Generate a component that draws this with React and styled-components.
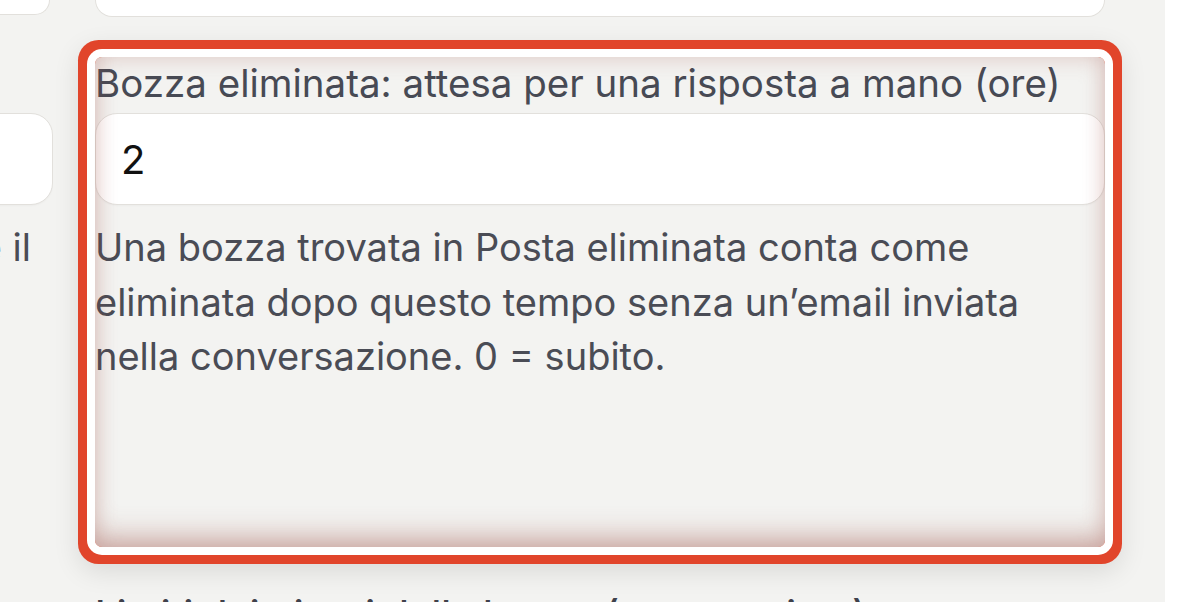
import React from "react";
import styled, { createGlobalStyle } from "styled-components";

const Global = createGlobalStyle`
  html, body { margin: 0; padding: 0; background: #f3f3f1; }
  body { font-family: Inter, "Noto Sans", sans-serif; }
  #root { height: 602px; }
  * { box-sizing: border-box; }
`;

const Page = styled.div`
  display: flex;
  width: 1200px;
  height: 602px;
  overflow: hidden;
  background: #f3f3f1;
`;

const Main = styled.main`
  flex: 1;
  min-width: 0;
  display: grid;
  grid-template-columns: 53px 1010px;
  grid-template-rows: 17px 490px auto;
  column-gap: 42px;
  row-gap: 40px;
  padding-right: 60px;
`;

const Strip = styled.aside`
  flex: none;
  width: 35px;
  background: #ffffff;
`;

const ClipCell = styled.div`
  overflow: hidden;
  display: flex;
  flex-direction: column;
  align-items: flex-end;
`;

const BoxTail = styled.div`
  flex: none;
  width: ${(p) => p.$w || 400}px;
  height: ${(p) => p.$h || 17}px;
  margin-right: ${(p) => p.$inset || 0}px;
  background: #ffffff;
  border: 1px solid #e2e0dc;
  border-top: none;
  border-radius: 0 0 22px 22px;
`;

const Field = styled.section`
  position: relative;
  display: flex;
  flex-direction: column;
  padding-top: ${(p) => p.$pad || 0}px;
  border-radius: 7px;
  ${(p) =>
    p.$highlight &&
    `
    box-shadow: 0 0 0 8px #ffffff, 0 0 0 17px #e1452b, 0 8px 26px 17px rgba(0, 0, 0, 0.1);
    &::after {
      content: "";
      position: absolute;
      inset: 0;
      border-radius: 7px;
      pointer-events: none;
      box-shadow: inset 0 -22px 28px -10px rgba(150, 70, 60, 0.3),
        inset 0 0 22px rgba(160, 80, 70, 0.28);
    }
  `}
`;

const Label = styled.label`
  display: block;
  font-family: Inter, "Noto Sans", sans-serif;
  font-size: 38.5px;
  line-height: 52px;
  font-weight: ${(p) => p.$weight || 400};
  color: ${(p) => p.$color || "#474a54"};
  margin-bottom: 4px;
  white-space: nowrap;
`;

const Input = styled.input`
  flex: none;
  width: ${(p) => (p.$w ? `${p.$w}px` : "100%")};
  height: 92px;
  padding: 0 25px;
  border: 1px solid #e2e0dc;
  border-radius: 22px;
  background: #ffffff;
  font-family: Inter, "Noto Sans", sans-serif;
  font-size: 40px;
  color: #111111;
  outline: none;
  box-shadow: 0 1px 2px rgba(0, 0, 0, 0.03);
`;

const Help = styled.p`
  margin: 15px 0 0;
  max-width: 1000px;
  font-family: Inter, "Noto Sans", sans-serif;
  font-size: 38px;
  line-height: 54.5px;
  color: #4a4c55;
`;

const HelpLine = styled.p`
  margin: 15px 22px 0 0;
  font-family: Inter, "Noto Sans", sans-serif;
  font-size: 38px;
  line-height: 54.5px;
  color: #4a4c55;
  white-space: nowrap;
`;

const Spacer = styled.div`
  height: ${(p) => p.$h}px;
  flex: none;
`;

export default function App() {
  return (
    <>
      <Global />
      <Page>
        <Main>
          <ClipCell>
            <BoxTail $w={300} $h={15} $inset={3} />
          </ClipCell>
          <BoxTail $w={1010} $h={17} />

          <ClipCell>
            <Spacer $h={56} />
            <Input $w={500} readOnly defaultValue="" />
            <HelpLine>Conta le risposte inviate a mano e il</HelpLine>
          </ClipCell>
          <Field $highlight>
            <Label htmlFor="bozza-ore">
              Bozza eliminata: attesa per una risposta a mano (ore)
            </Label>
            <Input id="bozza-ore" readOnly defaultValue="2" />
            <Help>
              Una bozza trovata in Posta eliminata conta come eliminata dopo
              questo tempo senza un’email inviata nella conversazione. 0 =
              subito.
            </Help>
          </Field>

          <div />
          <Field $pad={1}>
            <Label $weight={500} $color="#3f414b">
              Limiti dei giorni della bozza (ore massime)
            </Label>
          </Field>
        </Main>
        <Strip />
      </Page>
    </>
  );
}
